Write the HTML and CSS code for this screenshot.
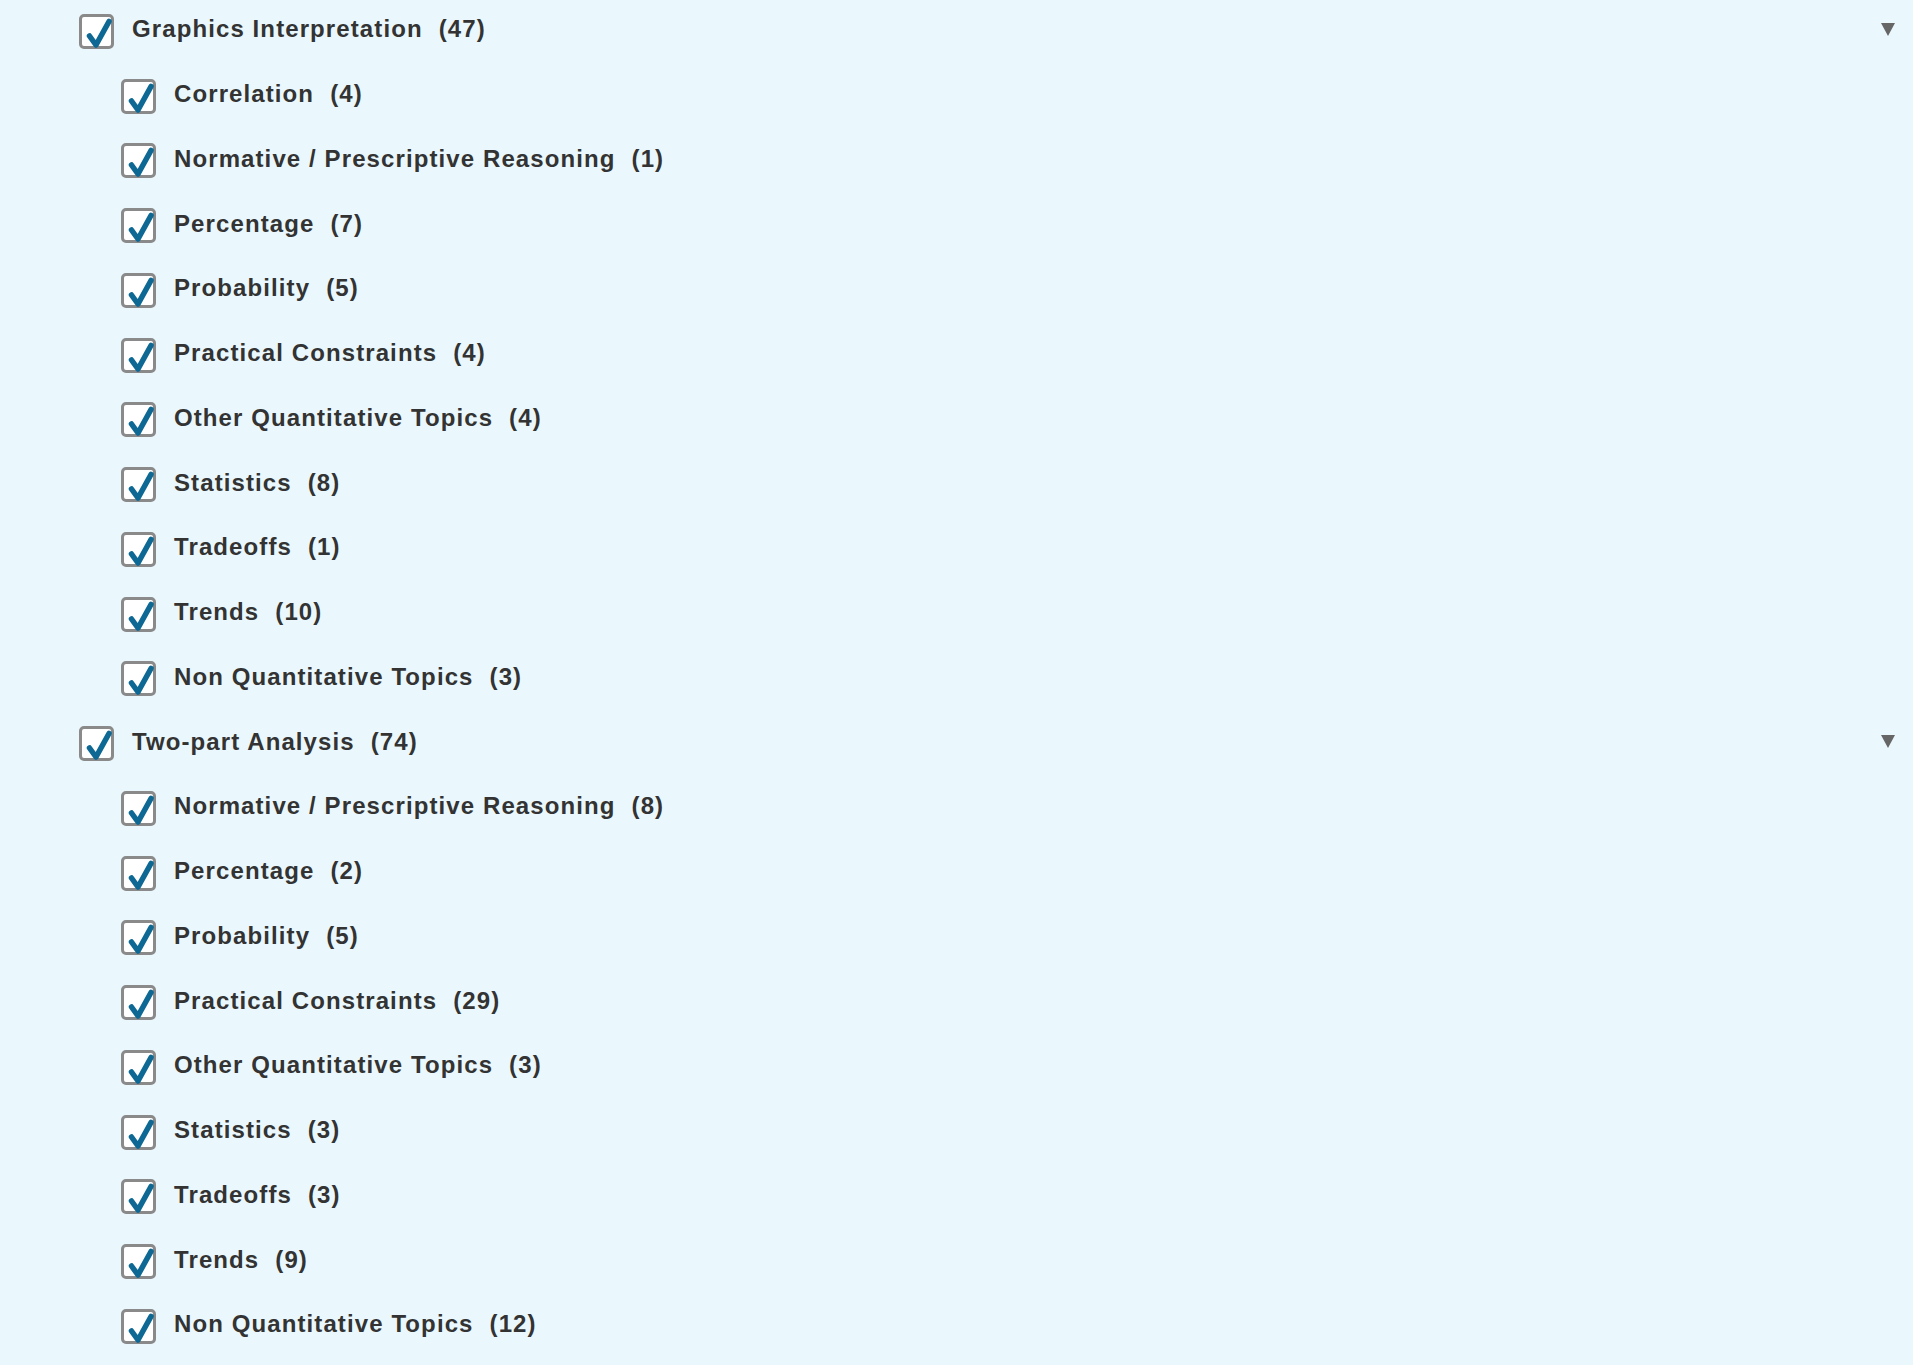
FILE: index.html
```html
<!DOCTYPE html>
<html lang="en">
<head>
  <meta charset="UTF-8" />
  <title>Topics</title>
  <link rel="stylesheet" href="styles.css">
</head>
<body>
  <svg class="defs" width="0" height="0">
    <symbol id="tick" viewBox="0 0 35 35">
      <polyline points="10.5,22 17,31 30,7.5" fill="none" stroke="#0e6894" stroke-width="5.5" stroke-linecap="round" stroke-linejoin="round"/>
    </symbol>
  </svg>

  <div class="tree">
    <div class="row group">
      <span class="box"><svg><use href="#tick"/></svg></span>
      <span class="name">Graphics Interpretation</span><span class="count">(47)</span>
      <span class="arrow"></span>
    </div>
    <div class="row sub"><span class="box"><svg><use href="#tick"/></svg></span><span class="name">Correlation</span><span class="count">(4)</span></div>
    <div class="row sub"><span class="box"><svg><use href="#tick"/></svg></span><span class="name">Normative / Prescriptive Reasoning</span><span class="count">(1)</span></div>
    <div class="row sub"><span class="box"><svg><use href="#tick"/></svg></span><span class="name">Percentage</span><span class="count">(7)</span></div>
    <div class="row sub"><span class="box"><svg><use href="#tick"/></svg></span><span class="name">Probability</span><span class="count">(5)</span></div>
    <div class="row sub"><span class="box"><svg><use href="#tick"/></svg></span><span class="name">Practical Constraints</span><span class="count">(4)</span></div>
    <div class="row sub"><span class="box"><svg><use href="#tick"/></svg></span><span class="name">Other Quantitative Topics</span><span class="count">(4)</span></div>
    <div class="row sub"><span class="box"><svg><use href="#tick"/></svg></span><span class="name">Statistics</span><span class="count">(8)</span></div>
    <div class="row sub"><span class="box"><svg><use href="#tick"/></svg></span><span class="name">Tradeoffs</span><span class="count">(1)</span></div>
    <div class="row sub"><span class="box"><svg><use href="#tick"/></svg></span><span class="name">Trends</span><span class="count">(10)</span></div>
    <div class="row sub"><span class="box"><svg><use href="#tick"/></svg></span><span class="name">Non Quantitative Topics</span><span class="count">(3)</span></div>

    <div class="row group">
      <span class="box"><svg><use href="#tick"/></svg></span>
      <span class="name">Two-part Analysis</span><span class="count">(74)</span>
      <span class="arrow"></span>
    </div>
    <div class="row sub"><span class="box"><svg><use href="#tick"/></svg></span><span class="name">Normative / Prescriptive Reasoning</span><span class="count">(8)</span></div>
    <div class="row sub"><span class="box"><svg><use href="#tick"/></svg></span><span class="name">Percentage</span><span class="count">(2)</span></div>
    <div class="row sub"><span class="box"><svg><use href="#tick"/></svg></span><span class="name">Probability</span><span class="count">(5)</span></div>
    <div class="row sub"><span class="box"><svg><use href="#tick"/></svg></span><span class="name">Practical Constraints</span><span class="count">(29)</span></div>
    <div class="row sub"><span class="box"><svg><use href="#tick"/></svg></span><span class="name">Other Quantitative Topics</span><span class="count">(3)</span></div>
    <div class="row sub"><span class="box"><svg><use href="#tick"/></svg></span><span class="name">Statistics</span><span class="count">(3)</span></div>
    <div class="row sub"><span class="box"><svg><use href="#tick"/></svg></span><span class="name">Tradeoffs</span><span class="count">(3)</span></div>
    <div class="row sub"><span class="box"><svg><use href="#tick"/></svg></span><span class="name">Trends</span><span class="count">(9)</span></div>
    <div class="row sub"><span class="box"><svg><use href="#tick"/></svg></span><span class="name">Non Quantitative Topics</span><span class="count">(12)</span></div>
  </div>
</body>
</html>
```

FILE: styles.css
```css
html, body {
  margin: 0;
  background-color: #eaf8fe;
  font-family: "Liberation Sans", Arial, sans-serif;
  color: #333;
}
.defs {
  position: absolute;
}
.tree {
  margin-top: -3px;
  padding-right: 18px;
}
.row {
  display: flex;
  align-items: center;
  height: 64.75px;
  font-size: 24px;
  font-weight: bold;
  letter-spacing: 1.1px;
}
.group {
  padding-left: 79px;
}
.sub {
  padding-left: 121px;
}
.box {
  position: relative;
  width: 29px;
  height: 29px;
  border: 3px solid #8a8a8a;
  border-radius: 5px;
  background-color: #fff;
  margin-top: 4px;
  margin-right: 18px;
  flex-shrink: 0;
}
.box svg {
  position: absolute;
  left: -3px;
  top: -3px;
  width: 35px;
  height: 35px;
  overflow: visible;
}
.count {
  margin-left: 16px;
}
.arrow {
  margin-left: auto;
  width: 0;
  height: 0;
  border-left: 7px solid transparent;
  border-right: 7px solid transparent;
  border-top: 13px solid #666;
}
```
